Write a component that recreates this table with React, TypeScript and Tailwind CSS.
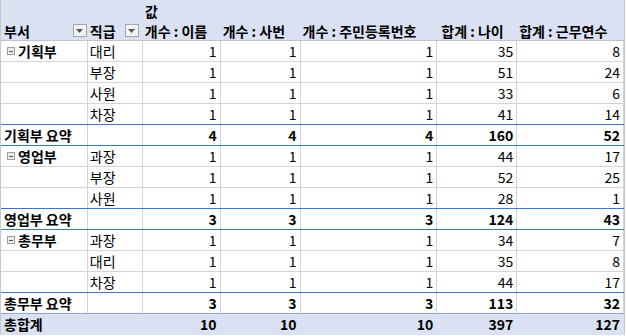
type Row =
  | { kind: "item"; dept?: string; rank: string; v: number[]; last?: boolean }
  | { kind: "sub"; label: string; v: number[]; final?: boolean };

const rows: Row[] = [
  { kind: "item", dept: "기획부", rank: "대리", v: [1, 1, 1, 35, 8] },
  { kind: "item", rank: "부장", v: [1, 1, 1, 51, 24] },
  { kind: "item", rank: "사원", v: [1, 1, 1, 33, 6] },
  { kind: "item", rank: "차장", v: [1, 1, 1, 41, 14], last: true },
  { kind: "sub", label: "기획부 요약", v: [4, 4, 4, 160, 52] },
  { kind: "item", dept: "영업부", rank: "과장", v: [1, 1, 1, 44, 17] },
  { kind: "item", rank: "부장", v: [1, 1, 1, 52, 25] },
  { kind: "item", rank: "사원", v: [1, 1, 1, 28, 1], last: true },
  { kind: "sub", label: "영업부 요약", v: [3, 3, 3, 124, 43] },
  { kind: "item", dept: "총무부", rank: "과장", v: [1, 1, 1, 34, 7] },
  { kind: "item", rank: "대리", v: [1, 1, 1, 35, 8] },
  { kind: "item", rank: "차장", v: [1, 1, 1, 44, 17], last: true },
  { kind: "sub", label: "총무부 요약", v: [3, 3, 3, 113, 32], final: true },
];

const numWidths = ["w-[78px]", "w-[80px]", "w-[137px]", "w-[80px]", "w-[107px]"];
const headers = ["개수 : 이름", "개수 : 사번", "개수 : 주민등록번호", "합계 : 나이", "합계 : 근무연수"];

function FilterButton({ className }: { className: string }) {
  return (
    <div className={`flex h-[13px] w-[14px] shrink-0 items-center justify-center border border-[#a6a6a6] bg-[#f3f3f3] ${className}`}>
      <svg width="7" height="4" viewBox="0 0 7 4">
        <path d="M0 0h7L3.5 4z" fill="#555" />
      </svg>
    </div>
  );
}

function Collapse() {
  return (
    <div className="mr-[3px] flex h-[8px] w-[8px] shrink-0 items-center justify-center border border-[#9c9c9c] bg-[#ececec]">
      <div className="h-px w-[4px] bg-[#555]" />
    </div>
  );
}

export default function App() {
  return (
    <div className="w-[627px] h-[336px] bg-white font-['Noto_Sans_CJK_KR',sans-serif] text-[14px] leading-[20px] text-black">
      <div className="w-[625px] border-l border-r border-[#c8c8c8]">
        {/* header */}
        <div className="h-[41px] bg-[#d9e1f2] border-b border-[#bcc4d4] font-bold">
          <div className="flex h-[21px]">
            <div className="w-[142px]" />
            <div className="pl-[2px] pt-[1px]">값</div>
          </div>
          <div className="flex h-[19px] items-center">
            <div className="flex w-[87px] items-center justify-between pl-[3px]">
              <span>부서</span>
              <FilterButton className="mr-px" />
            </div>
            <div className="flex w-[55px] items-center justify-between pl-[2px]">
              <span>직급</span>
              <FilterButton className="mr-[4px]" />
            </div>
            {headers.map((h, i) => (
              <div key={h} className={`${numWidths[i]} whitespace-nowrap pl-[2px] ${i === 3 ? "pl-[4px]" : ""}`}>
                {h}
              </div>
            ))}
          </div>
        </div>

        {rows.map((r, idx) => {
          const bottom =
            r.kind === "sub"
              ? r.final
                ? "border-[#8ea9db]"
                : "border-[#4472c4]"
              : r.last
              ? "border-[#4472c4]"
              : "border-[#d4d4d4]";
          const bold = r.kind === "sub" ? "font-bold" : "";
          return (
            <div key={idx} className={`flex h-[21px] border-b ${bottom}`}>
              <div className="flex w-[87px] items-center border-r border-[#d4d4d4] pl-[3px] font-bold whitespace-nowrap">
                {r.kind === "sub" ? (
                  r.label
                ) : r.dept ? (
                  <>
                    <div className="w-[3px]" />
                    <Collapse />
                    {r.dept}
                  </>
                ) : null}
              </div>
              <div className="w-[55px] border-r border-[#d4d4d4] pl-[2px]">
                {r.kind === "item" ? r.rank : ""}
              </div>
              {r.v.map((n, i) => (
                <div
                  key={i}
                  className={`${numWidths[i]} border-r border-[#d4d4d4] pr-[3px] text-right ${bold} ${i === 4 ? "border-[#c8c8c8]" : ""}`}
                >
                  {n}
                </div>
              ))}
            </div>
          );
        })}

        {/* grand total */}
        <div className="flex h-[21px] bg-[#d9e1f2] font-bold">
          <div className="w-[142px] pl-[3px]">총합계</div>
          {[10, 10, 10, 397, 127].map((n, i) => (
            <div key={i} className={`${numWidths[i]} pr-[4px] text-right`}>
              {n}
            </div>
          ))}
        </div>
      </div>
    </div>
  );
}
